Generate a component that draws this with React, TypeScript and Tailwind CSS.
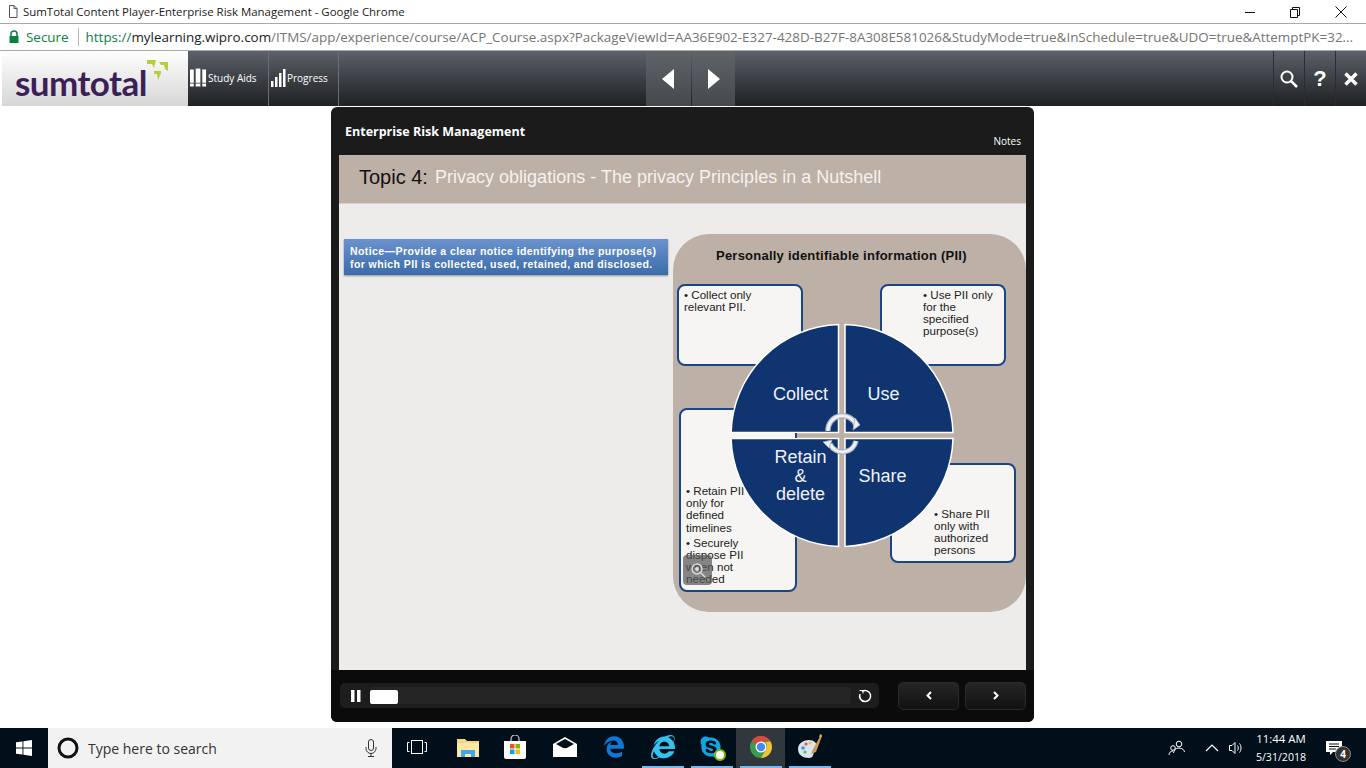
import { FaInternetExplorer, FaSkype } from "react-icons/fa";
import { FaEdgeLegacy } from "react-icons/fa6";

const chromeFont = "font-['Open_Sans',sans-serif]";
const arial = "font-['Liberation_Sans',Arial,sans-serif]";

function TitleBar() {
  return (
    <div className={`flex h-[23px] items-center bg-white ${chromeFont}`}>
      <svg width="12" height="15" viewBox="0 0 12 15" className="ml-[7px]" fill="none" stroke="#555">
        <path d="M2.500 1.500h4.500l3 3v9h-7.500z M7 1.500v3h3" />
      </svg>
      <span className="ml-[4px] mt-[1px] text-[11.45px] text-[#1a1a1a] whitespace-nowrap">
        SumTotal Content Player-Enterprise Risk Management - Google Chrome
      </span>
      <div className="ml-auto flex items-center">
        <svg width="12" height="12" viewBox="0 0 12 12" className="mr-[33px]" stroke="#111">
          <path d="M1 6.500h10" />
        </svg>
        <svg width="12" height="12" viewBox="0 0 12 12" className="mr-[34px]" fill="none" stroke="#111">
          <path d="M1.500 3.500h7v8h-7z M3.500 3.500v-2h7v8h-2" />
        </svg>
        <svg width="12" height="12" viewBox="0 0 12 12" className="mr-[19px]" stroke="#111">
          <path d="M.5.5l11 11M11.500.5l-11 11" />
        </svg>
      </div>
    </div>
  );
}

function AddressBar() {
  return (
    <div className={`flex h-[28px] items-center overflow-hidden whitespace-nowrap border-y border-[#a9a9a9] bg-white text-[13.43px] ${chromeFont}`}>
      <svg width="12" height="14" viewBox="0 0 12 14" className="ml-[8px]">
        <path d="M3 6V4a3 3 0 0 1 6 0v2" fill="none" stroke="#0b8043" strokeWidth="1.500" />
        <rect x="1.500" y="6" width="9" height="7" fill="#0b8043" />
      </svg>
      <span className="ml-[6px] text-[#0b8043]">Secure</span>
      <span className="ml-[9px] h-[18px] w-px bg-[#b5b5b5]" />
      <span className="ml-[7px] text-[#0b8043]">https://</span>
      <span className="text-[#222]">mylearning.wipro.com</span>
      <span className="text-[#757575]">
        /ITMS/app/experience/course/ACP_Course.aspx?PackageViewId=AA36E902-E327-428D-B27F-8A308E581026&amp;StudyMode=true&amp;InSchedule=true&amp;UDO=true&amp;AttemptPK=32...
      </span>
    </div>
  );
}

function Logo() {
  return (
    <div className="relative flex h-full w-[188px] items-end border-l-2 border-white bg-gradient-to-b from-white to-[#d6d6d6] pb-[4px] pl-[13px]">
      <span className="font-['Lato',sans-serif] text-[35px] leading-[40px] font-bold tracking-[-0.55px] text-[#3c1f58]">
        sumtotal
      </span>
      <svg width="24" height="24" viewBox="0 0 24 24" className="absolute top-[8px] left-[143px]" fill="#b5cf35">
        <path d="M2 1h9l-2 8-2-4H2z" />
        <path d="M14 3h9v9l-3-2-1-4h-3z" />
        <path d="M9 12h7v2l-3 7-1-6H9z" />
      </svg>
    </div>
  );
}

function AppHeader() {
  return (
    <div className="flex h-[55px] bg-gradient-to-b from-[#5c6269] to-[#1f2124]">
      <Logo />
      <div className={`flex w-[81px] items-center gap-[1px] border-r border-[#6a6e73] pb-[1px] pl-[2px] text-[10px] text-white ${chromeFont}`}>
        <svg width="17" height="20" viewBox="0 0 18 20" fill="white">
          <rect x="0" y="1" width="4" height="18" />
          <rect x="6" y="0" width="5" height="19" />
          <rect x="13" y="1" width="4" height="18" />
          <path d="M0 15h17v1H0z" fill="#555" />
        </svg>
        Study Aids
      </div>
      <div className={`flex w-[70px] items-center gap-[1px] border-r border-[#6a6e73] pb-[1px] pl-[2px] text-[10px] text-white ${chromeFont}`}>
        <svg width="15" height="20" viewBox="0 0 15 20" fill="white">
          <rect x="0" y="13" width="2.500" height="6" />
          <rect x="4" y="9" width="2.500" height="10" />
          <rect x="8" y="5" width="2.500" height="14" />
          <rect x="12" y="1" width="2.500" height="18" />
        </svg>
        Progress
      </div>
      <div className="ml-[307px] flex h-full gap-px">
        <button className="flex w-[45px] items-center justify-center bg-gradient-to-b from-[#5e6469] to-[#45494d]">
          <svg width="12" height="20" viewBox="0 0 12 20" fill="white" className="mr-[2px]">
            <path d="M12 0v20L0 10z" />
          </svg>
        </button>
        <button className="flex w-[43px] items-center justify-center bg-gradient-to-b from-[#5e6469] to-[#45494d]">
          <svg width="12" height="20" viewBox="0 0 12 20" fill="white">
            <path d="M0 0v20l12-10z" />
          </svg>
        </button>
      </div>
      <div className="ml-auto flex h-full">
        <div className="flex w-[31px] items-center justify-center border-l border-[#2b2d30]">
          <svg width="18" height="18" viewBox="0 0 18 18" fill="none" stroke="white" strokeWidth="2">
            <circle cx="7" cy="7" r="5.500" />
            <path d="M11 11l6 6" strokeWidth="2.500" />
          </svg>
        </div>
        <div className={`flex w-[31px] items-center justify-center border-l border-[#2b2d30] text-[22px] font-bold text-white ${arial}`}>?</div>
        <div className="flex w-[31px] items-center justify-center border-l border-[#2b2d30]">
          <svg width="14" height="14" viewBox="0 0 14 14" stroke="white" strokeWidth="3.500">
            <path d="M1.500 1.500l11 11M12.500 1.500l-11 11" />
          </svg>
        </div>
      </div>
    </div>
  );
}

function InfoBox({ className, children }: { className: string; children: React.ReactNode }) {
  return (
    <div
      className={`absolute flex flex-col rounded-[8px] border-2 border-[#1c4587] bg-[#f6f5f3] text-[11.6px] leading-[12.100px] text-[#222] ${className}`}
    >
      {children}
    </div>
  );
}

function Wheel() {
  return (
    <svg width="353" height="378" viewBox="0 0 353 378" className="absolute inset-0">
      <g fill="#0f3470" stroke="white" strokeWidth="1.500">
        <path d="M165.500 198.500V90.600A111 111 0 0 0 58.100 198.500Z" />
        <path d="M172 198.500V90.600A111 111 0 0 1 280 198.500Z" />
        <path d="M165.500 204.500V312.400A111 111 0 0 1 58.100 204.500Z" />
        <path d="M172 204.500V312.400A111 111 0 0 0 280 204.500Z" />
      </g>
      <rect x="122" y="199" width="2" height="5" fill="#1c4587" />
      <g fill="none">
        <path d="M155 197A14.500 14.500 0 0 1 183 191" stroke="#a4afc2" strokeWidth="5.500" />
        <path d="M155 197A14.500 14.500 0 0 1 183 191" stroke="#eef0f4" strokeWidth="3" />
        <path d="M183 207A13.800 13.800 0 0 1 157 210" stroke="#a4afc2" strokeWidth="5.500" />
        <path d="M183 207A13.800 13.800 0 0 1 157 210" stroke="#eef0f4" strokeWidth="3" />
      </g>
      <path d="M182 184l5 7-7 5z" fill="#eef0f4" stroke="#a4afc2" strokeWidth=".8" />
      <path d="M150 208l9-2-3 8z" fill="#eef0f4" stroke="#a4afc2" strokeWidth=".8" />
    </svg>
  );
}

function Diagram() {
  return (
    <div className={`relative mt-[30px] h-[378px] w-[353px] rounded-[36px] bg-[#bcb0a7] ${arial}`}>
      <div className="pt-[14px] pl-[43px] text-[13px] leading-[16px] font-bold tracking-[0.23px] text-[#111] whitespace-nowrap">
        Personally identifiable information (PII)
      </div>
      <InfoBox className="top-[50px] left-[4px] h-[82px] w-[126px] pt-[3px] pl-[5px]">
        <span>• Collect only</span>
        <span>relevant PII.</span>
      </InfoBox>
      <InfoBox className="top-[50px] left-[207px] h-[82px] w-[126px] pt-[3px] pl-[41px]">
        <span>• Use PII only</span>
        <span>for the</span>
        <span>specified</span>
        <span>purpose(s)</span>
      </InfoBox>
      <InfoBox className="top-[174px] left-[6px] h-[184px] w-[118px] justify-end pb-[5px] pl-[5px]">
        <span>• Retain PII</span>
        <span>only for</span>
        <span>defined</span>
        <span className="mb-[3px]">timelines</span>
        <span>• Securely</span>
        <span>dispose PII</span>
        <span>when not</span>
        <span>needed</span>
      </InfoBox>
      <InfoBox className="top-[229px] left-[217px] h-[100px] w-[126px] justify-end pb-[5px] pl-[42px]">
        <span>• Share PII</span>
        <span>only with</span>
        <span>authorized</span>
        <span>persons</span>
      </InfoBox>
      <Wheel />
      <div className="absolute top-[150px] left-[90px] w-[75px] text-center text-[18px] leading-[20px] text-[#eef2f8]">Collect</div>
      <div className="absolute top-[150px] left-[173px] w-[75px] text-center text-[18px] leading-[20px] text-[#eef2f8]">Use</div>
      <div className="absolute top-[214px] left-[90px] w-[75px] text-center text-[18px] leading-[18.500px] text-[#eef2f8]">
        Retain
        <br />&amp;
        <br />delete
      </div>
      <div className="absolute top-[232px] left-[172px] w-[75px] text-center text-[18px] leading-[20px] text-[#eef2f8]">Share</div>
      <div className="absolute top-[321px] left-[10px] flex h-[30px] w-[29px] items-center justify-center rounded-[4px] bg-[#555]/70">
        <svg width="16" height="16" viewBox="0 0 16 16" fill="none" stroke="#ddd" strokeWidth="1.500">
          <circle cx="7" cy="7" r="5" />
          <circle cx="7" cy="7" r="2" fill="#ddd" stroke="none" />
          <path d="M11 11l4 4" />
        </svg>
      </div>
    </div>
  );
}

function Slide() {
  return (
    <div className="mx-[8px] flex h-[515px] flex-col bg-[#edecea]">
      <div className={`flex h-[49px] items-center border-b border-[#d8d4d0] bg-[#bcb0a7] pb-[5px] pl-[20px] ${arial}`}>
        <span className="text-[20px] text-[#111]">Topic 4:</span>
        <span className="ml-[7px] mt-[1px] text-[18px] tracking-[0.01px] text-[#f4f2f0]">
          Privacy obligations - The privacy Principles in a Nutshell
        </span>
      </div>
      <div className="flex items-start gap-[5px] pl-[5px]">
        <div className={`mt-[35px] h-[36px] w-[324px] bg-gradient-to-b from-[#6b93cd] to-[#3a6cab] pt-[6px] pl-[6px] text-[10.500px] leading-[13px] font-bold tracking-[0.42px] text-white shadow-[0_1px_2px_rgba(0,0,0,0.4)] ${arial}`}>
          Notice—Provide a clear notice identifying the purpose(s)
          <br />
          for which PII is collected, used, retained, and disclosed.
        </div>
        <Diagram />
      </div>
    </div>
  );
}

function PlayerControls() {
  return (
    <div className="flex h-[52px] items-center rounded-b-[6px] bg-[#0b0b0b] pb-[1px] pl-[9px]">
      <div className="flex h-[25px] w-[539px] items-center rounded-[5px] bg-[#1d1d1d]">
        <svg width="10" height="12" viewBox="0 0 10 12" fill="white" className="ml-[11px]">
          <rect x="0" width="3.500" height="12" />
          <rect x="6" width="3.500" height="12" />
        </svg>
        <div className="ml-[9px] h-[17px] w-[481px] rounded-[3px] bg-[#252525]">
          <div className="mt-[2px] h-[14px] w-[28px] translate-y-[1px] rounded-[2px] bg-white" />
        </div>
        <svg width="14" height="14" viewBox="0 0 14 14" fill="none" stroke="white" strokeWidth="1.500" className="ml-[7px]">
          <path d="M4 2.500A5.500 5.500 0 1 1 2 5" />
          <path d="M1.500 1.500h3.500v3" strokeWidth="1" />
        </svg>
      </div>
      <button className="ml-[19px] flex h-[28px] w-[61px] items-center justify-center rounded-[5px] border border-[#2a2a2a] bg-gradient-to-b from-[#262626] to-[#111]">
        <svg width="6" height="9" viewBox="0 0 6 9" fill="none" stroke="white" strokeWidth="2">
          <path d="M5 1L1.500 4.500 5 8" />
        </svg>
      </button>
      <button className="ml-[6px] flex h-[28px] w-[61px] items-center justify-center rounded-[5px] border border-[#2a2a2a] bg-gradient-to-b from-[#262626] to-[#111]">
        <svg width="6" height="9" viewBox="0 0 6 9" fill="none" stroke="white" strokeWidth="2">
          <path d="M1 1l3.500 3.500L1 8" />
        </svg>
      </button>
    </div>
  );
}

function Player() {
  return (
    <div className="ml-[331px] flex h-[615px] w-[703px] flex-col rounded-[6px] bg-[#1b1b1b]">
      <div className={`relative h-[48px] shrink-0 pt-[16px] pl-[14px] text-[12.500px] font-bold text-white ${chromeFont}`}>
        Enterprise Risk Management
        <span className="absolute right-[13px] bottom-[6px] text-[10px] font-normal">Notes</span>
      </div>
      <Slide />
      <PlayerControls />
    </div>
  );
}

function ChromeIcon() {
  return (
    <svg width="24" height="24" viewBox="0 0 24 24">
      <circle cx="12" cy="12" r="11" fill="#3c9a4c" />
      <path d="M12 1a11 11 0 0 1 9.500 5.500H12A5.500 5.500 0 0 0 7 9.500L2.800 5.800A11 11 0 0 1 12 1z" fill="#d9493d" />
      <path d="M21.500 6.500A11 11 0 0 1 12 23l4.700-8.200A5.500 5.500 0 0 0 16 7z" fill="#f2c231" />
      <circle cx="12" cy="12" r="5.500" fill="white" />
      <circle cx="12" cy="12" r="4.200" fill="#4f86ec" />
    </svg>
  );
}

function PaintIcon() {
  return (
    <svg width="26" height="26" viewBox="0 0 26 26">
      <path d="M1 15c0-6 6-9 11-9 5 0 8 3 8 7 0 3-2 3-3 5-1 3-1 6-5 6-6 0-11-3-11-9z" fill="#d8e4ee" />
      <circle cx="6" cy="14" r="1.800" fill="#4a90d9" />
      <circle cx="9" cy="10" r="1.600" fill="#e0564a" />
      <circle cx="13" cy="9" r="1.600" fill="#e9c440" />
      <circle cx="8" cy="18" r="1.600" fill="#63b65a" />
      <path d="M24 1l-8 14-2 5 5-2 6-16z" fill="#c99a5b" />
      <path d="M23 0l2 1-1 3-2-1z" fill="#e8a33d" />
    </svg>
  );
}

function TaskSlot({ children, mark, active }: { children?: React.ReactNode; mark?: boolean; active?: boolean }) {
  return (
    <div className={`flex h-full w-[49px] flex-col ${active ? "bg-[#30373d]" : ""}`}>
      <div className="flex flex-1 items-center justify-center">{children}</div>
      <div className={`mx-auto h-[2px] w-[42px] ${mark ? "bg-[#76b9ed]" : ""}`} />
    </div>
  );
}

function Taskbar() {
  return (
    <div className={`flex h-[40px] items-center bg-[#010f1a] ${chromeFont}`}>
      <div className="flex h-full w-[48px] items-center justify-center">
        <svg width="16" height="16" viewBox="0 0 16 16" fill="white">
          <path d="M0 2.300L6.500 1.400V7.500H0zM7.400 1.300L16 0V7.500H7.400zM0 8.500h6.500v6.100L0 13.700zM7.400 8.500H16V16l-8.600-1.200z" />
        </svg>
      </div>
      <div className="flex h-full w-[344px] items-center bg-[#f2f2f2] pl-[9px]">
        <svg width="22" height="22" viewBox="0 0 22 22" fill="none" stroke="#111" strokeWidth="3">
          <circle cx="11" cy="11" r="9" />
        </svg>
        <span className="ml-[9px] text-[14px] text-[#333]">Type here to search</span>
        <svg width="12" height="18" viewBox="0 0 12 18" fill="none" stroke="#333" className="ml-auto mr-[15px]">
          <rect x="3.500" y=".5" width="5" height="11" rx="2.500" />
          <path d="M1 8v1.500a5 5 0 0 0 10 0V8M6 14.500V17M3 17.500h6" />
        </svg>
      </div>
      <div className="flex h-full pl-px">
        <TaskSlot>
          <svg width="20" height="14" viewBox="0 0 20 14" fill="none" stroke="white" className="mr-[2px]">
            <rect x="4.500" y=".5" width="11" height="13" />
            <path d="M2.500 2.500H.5v9h2M17.500 2.500h2v9h-2" />
          </svg>
        </TaskSlot>
        <TaskSlot>
          <svg width="22" height="19" viewBox="0 0 22 19" className="ml-[2px]">
            <path d="M0 1h8l2 2h12v16H0z" fill="#f5d77e" />
            <path d="M0 5h22v14H0z" fill="#fbe7a3" />
            <path d="M4 19v-7h14v7h-4v-3H8v3z" fill="#3ea9e6" />
          </svg>
        </TaskSlot>
        <TaskSlot>
          <svg width="22" height="24" viewBox="0 0 22 24" className="mr-[2px]">
            <path d="M7 8V4a4 4 0 0 1 8 0v4" fill="none" stroke="#ccc" strokeWidth="1.200" />
            <path d="M0 6h22v16a2 2 0 0 1-2 2H2a2 2 0 0 1-2-2z" fill="white" />
            <rect x="6" y="9" width="4.500" height="4.500" fill="#f25022" />
            <rect x="11.500" y="9" width="4.500" height="4.500" fill="#7fba00" />
            <rect x="6" y="14.500" width="4.500" height="4.500" fill="#00a4ef" />
            <rect x="11.500" y="14.500" width="4.500" height="4.500" fill="#ffb900" />
          </svg>
        </TaskSlot>
        <TaskSlot>
          <svg width="24" height="20" viewBox="0 0 24 20">
            <path d="M0 7L12 0l12 7v13H0z" fill="white" />
            <path d="M3 7l9-5 9 5-9 5z" fill="#010f1a" />
            <path d="M0 7l12 7 12-7-9 5-3-1-3 1z" fill="white" />
          </svg>
        </TaskSlot>
        <TaskSlot>
          <FaEdgeLegacy size={22} color="#0f78d4" />
        </TaskSlot>
        <TaskSlot mark>
          <FaInternetExplorer size={24} color="#35c2ee" />
        </TaskSlot>
        <TaskSlot mark>
          <div className="relative mr-[2px]">
            <FaSkype size={24} color="#12a5e4" />
            <span className="absolute -right-[3px] -bottom-[2px] h-[12px] w-[12px] rounded-full border-2 border-[#7fba00] bg-white" />
          </div>
        </TaskSlot>
        <TaskSlot mark active>
          <ChromeIcon />
        </TaskSlot>
        <TaskSlot mark>
          <PaintIcon />
        </TaskSlot>
      </div>
      <div className="ml-auto flex h-full items-center text-white">
        <svg width="18" height="18" viewBox="0 0 18 16" fill="none" stroke="white">
          <circle cx="11" cy="4" r="2.800" />
          <path d="M5.500 13c.5-3 2-5 5.500-5s5 2 5.500 4" />
          <circle cx="5" cy="8" r="2.300" />
          <path d="M1 15c.3-2.500 1.500-4 4-4" />
        </svg>
        <svg width="14" height="8" viewBox="0 0 14 8" fill="none" stroke="white" strokeWidth="1.200" className="ml-[19px]">
          <path d="M1 7l6-6 6 6" />
        </svg>
        <svg width="16" height="14" viewBox="0 0 16 14" fill="none" stroke="white" className="ml-[10px]">
          <path d="M.5 4.500h2.500L6 1.500v11L3 9.500H.5zM8.500 4.500c1 1.500 1 3.500 0 5M10.500 2.500c2 2.500 2 6.500 0 9" />
        </svg>
        <div className="ml-[10px] flex w-[52px] flex-col items-center leading-[18px] whitespace-nowrap">
          <span className="text-[11.4px]">11:44 AM</span>
          <span className="text-[10.6px]">5/31/2018</span>
        </div>
        <div className="relative ml-[19px] mr-[24px]">
          <svg width="16" height="16" viewBox="0 0 16 16">
            <path d="M0 1h16v11H7l-3 3v-3H0z" fill="white" />
            <path d="M3 4h10M3 6.500h10M3 9h7" stroke="#010f1a" />
          </svg>
          <span className="absolute -right-[9px] -bottom-[6px] flex h-[16px] w-[16px] items-center justify-center rounded-full border border-[#888] bg-[#333] text-[10px] font-bold">
            4
          </span>
        </div>
      </div>
    </div>
  );
}

export default function App() {
  return (
    <div className="flex h-[768px] w-[1366px] flex-col overflow-hidden bg-white">
      <TitleBar />
      <AddressBar />
      <AppHeader />
      <div className="flex-1 pt-px">
        <Player />
      </div>
      <Taskbar />
    </div>
  );
}
